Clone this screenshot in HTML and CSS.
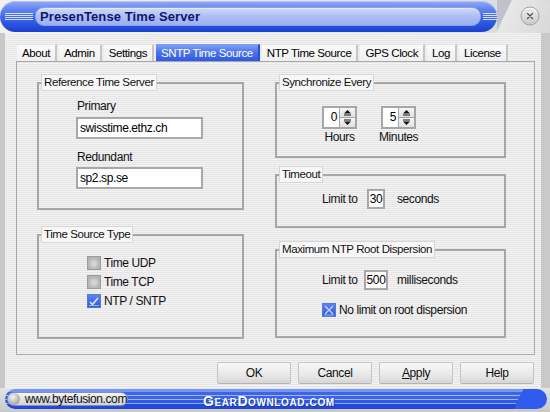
FILE: index.html
```html
<!DOCTYPE html>
<html>
<head>
<meta charset="utf-8">
<title>PresenTense Time Server</title>
<link rel="stylesheet" href="styles.css">
</head>
<body>
<div class="window">
  <div class="titlebar">
    <div class="bluebar">
      <div class="grip"></div>
      <div class="titlepill">PresenTense Time Server</div>
      <div class="grip grip-r"></div>
    </div>
    <div class="closezone">
      <div class="closebtn">
        <svg width="20" height="20" viewBox="0 0 20 20">
          <defs>
            <linearGradient id="cg" x1="0" y1="0" x2="0" y2="1">
              <stop offset="0" stop-color="#fafafa"/>
              <stop offset="1" stop-color="#c4c4c4"/>
            </linearGradient>
          </defs>
          <circle cx="10" cy="10" r="9" fill="url(#cg)" stroke="#a4a4a8" stroke-width="1"/>
          <circle cx="10" cy="10" r="6" fill="none" stroke="#d8d8dc" stroke-width="1"/>
          <path d="M7.5 7.5 L12.5 12.5 M12.5 7.5 L7.5 12.5" stroke="#55555c" stroke-width="1.4" stroke-linecap="round"/>
        </svg>
      </div>
    </div>
  </div>

  <div class="body">
    <div class="tabs">
      <div class="tab">About</div>
      <div class="tab">Admin</div>
      <div class="tab">Settings</div>
      <div class="tab tab-active">SNTP Time Source</div>
      <div class="tab">NTP Time Source</div>
      <div class="tab">GPS Clock</div>
      <div class="tab">Log</div>
      <div class="tab">License</div>
    </div>

    <div class="panel">
      <div class="col">
        <fieldset class="fs fs-ref">
          <legend>Reference Time Server</legend>
          <div class="fs-body">
            <div class="field-label">Primary</div>
            <div class="textbox">swisstime.ethz.ch</div>
            <div class="field-label field-label-2">Redundant</div>
            <div class="textbox">sp2.sp.se</div>
          </div>
        </fieldset>

        <fieldset class="fs fs-type">
          <legend>Time Source Type</legend>
          <div class="fs-body">
            <div class="cb"><span class="box box-off"></span><span>Time UDP</span></div>
            <div class="cb"><span class="box box-off"></span><span>Time TCP</span></div>
            <div class="cb">
              <span class="box box-on">
                <svg width="14" height="14" viewBox="0 0 14 14"><path d="M3 8 L5.5 10.5 L11 4" fill="none" stroke="#dfe8ff" stroke-width="1.6"/><path d="M2 11.5 H12" stroke="#9fb6fa" stroke-width="1"/></svg>
              </span>
              <span>NTP / SNTP</span>
            </div>
          </div>
        </fieldset>
      </div>

      <div class="col">
        <fieldset class="fs fs-sync">
          <legend>Synchronize Every</legend>
          <div class="fs-body units">
            <div class="unit">
              <div class="spin">
                <div class="spin-val">0</div>
                <div class="spin-btns">
                  <span><svg width="9" height="7" viewBox="0 0 9 7"><path d="M4.5 1 L8 4.5 H1 Z" fill="#111"/><rect x="1" y="5.5" width="7" height="1" fill="#111"/></svg></span>
                  <span><svg width="9" height="7" viewBox="0 0 9 7"><rect x="1" y="0.5" width="7" height="1" fill="#111"/><path d="M1 2.5 H8 L4.5 6 Z" fill="#111"/></svg></span>
                </div>
              </div>
              <div class="unit-label">Hours</div>
            </div>
            <div class="unit">
              <div class="spin">
                <div class="spin-val">5</div>
                <div class="spin-btns">
                  <span><svg width="9" height="7" viewBox="0 0 9 7"><path d="M4.5 1 L8 4.5 H1 Z" fill="#111"/><rect x="1" y="5.5" width="7" height="1" fill="#111"/></svg></span>
                  <span><svg width="9" height="7" viewBox="0 0 9 7"><rect x="1" y="0.5" width="7" height="1" fill="#111"/><path d="M1 2.5 H8 L4.5 6 Z" fill="#111"/></svg></span>
                </div>
              </div>
              <div class="unit-label">Minutes</div>
            </div>
          </div>
        </fieldset>

        <fieldset class="fs fs-timeout">
          <legend>Timeout</legend>
          <div class="fs-body">
            <div class="limit">
              <span class="limit-lbl">Limit to</span>
              <span class="slot"><span class="num">30</span></span>
              <span class="unit-text">seconds</span>
            </div>
          </div>
        </fieldset>

        <fieldset class="fs fs-disp">
          <legend>Maximum NTP Root Dispersion</legend>
          <div class="fs-body">
            <div class="limit">
              <span class="limit-lbl">Limit to</span>
              <span class="slot"><span class="num">500</span></span>
              <span class="unit-text">milliseconds</span>
            </div>
            <div class="cb cb-nolimit">
              <span class="box box-x">
                <svg width="14" height="14" viewBox="0 0 14 14"><path d="M3 3 L11 11 M11 3 L3 11" stroke="#c8d6ff" stroke-width="1.3"/><path d="M2 12 H12" stroke="#a8bcff" stroke-width="1"/></svg>
              </span>
              <span>No limit on root dispersion</span>
            </div>
          </div>
        </fieldset>
      </div>
    </div>

    <div class="actions">
      <div class="btn">OK</div>
      <div class="btn">Cancel</div>
      <div class="btn"><span class="ul">A</span>pply</div>
      <div class="btn">Help</div>
    </div>
  </div>

  <div class="status">
    <div class="statusbar">
      <div class="site"><span class="knob"></span><span>www.bytefusion.com</span></div>
      <div class="watermark">GearDownload.com</div>
    </div>
  </div>
</div>
</body>
</html>
```

FILE: styles.css
```css
html, body {
  margin: 0;
  padding: 0;
}

body {
  font-family: "Liberation Sans", Arial, sans-serif;
  font-size: 11.5px;
  letter-spacing: -0.4px;
  color: #111;
}

.window {
  width: 550px;
  height: 412px;
  display: flex;
  flex-direction: column;
  background: #cdcdcd;
  overflow: hidden;
}

/* ---------- title bar ---------- */
.titlebar {
  height: 33px;
  flex: none;
  display: flex;
  background: linear-gradient(to right, #f2f2f2, #dadada);
}

.bluebar {
  width: 497px;
  height: 31px;
  margin-top: 1px;
  border-radius: 16px;
  display: flex;
  align-items: center;
  background: linear-gradient(to bottom, #94acf6 0%, #6486ef 25%, #3d66e8 55%, #2550de 80%, #1b40cc 100%);
  box-shadow: inset 0 1px 0 #b4c4fa;
}

.grip {
  width: 28px;
  height: 7px;
  margin-left: 5px;
  background: repeating-linear-gradient(to bottom, #d4deff 0 1px, transparent 1px 2px);
}

.grip-r {
  width: 14px;
  margin-left: 2px;
}

.titlepill {
  flex: 1;
  height: 17px;
  margin-left: 2px;
  padding-left: 4px;
  border: 1px solid #8ca2ee;
  border-radius: 9px;
  display: flex;
  align-items: center;
  background: linear-gradient(to bottom, #d0daff 0%, #b0c0f4 45%, #9cb0ef 100%);
  box-shadow: inset 0 1px 0 #e6ecff;
  font-size: 13px;
  font-weight: bold;
  letter-spacing: 0.1px;
  color: #0e1670;
}

.closezone {
  flex: 1;
  display: flex;
  justify-content: flex-end;
  align-items: flex-start;
  padding: 6px 10px 0 0;
  border-top-right-radius: 12px;
  background: linear-gradient(116deg, #bfc2cc 0 13px, #e8e8e8 14px, #d8d8d8 100%);
}

.closebtn {
  width: 20px;
  height: 20px;
}

/* ---------- body ---------- */
.body {
  flex: 1;
  display: flex;
  flex-direction: column;
  padding: 11px 6px 0 11px;
  border-left: 5px solid #c8c8c8;
  border-right: 9px solid #c9c9c9;
  background: repeating-linear-gradient(to bottom, #f3f3f3 0 1px, #e5e5e5 1px 2px);
}

.tabs {
  display: flex;
  gap: 2px;
  height: 17px;
  padding-left: 1px;
}

.tab {
  padding: 0 5px;
  line-height: 16px;
  border-top: 1px solid #e2e2e2;
  border-right: 2px solid #c6c6c6;
  background: linear-gradient(to bottom, #fafafa, #efefef);
  color: #000;
  white-space: nowrap;
}

.tab-active {
  color: #fff;
  border-top-color: #7c9cf4;
  border-right-color: #2a52d8;
  background: linear-gradient(to bottom, #7e9ef5 0%, #4d74ec 45%, #2d58e2 100%);
}

.panel {
  border: 1px solid #a8a8a8;
  padding: 12px 0 15px 20px;
  display: grid;
  grid-template-columns: 207px 231px;
  column-gap: 31px;
  align-items: start;
}

.col {
  display: flex;
  flex-direction: column;
}

/* ---------- group boxes ---------- */
.fs {
  margin: 0;
  padding: 0;
  min-width: 0;
  border: 2px solid #a6a6a6;
}

.fs legend {
  margin-left: 2px;
  padding: 0 2px;
  height: 17px;
  box-sizing: border-box;
  line-height: 15px;
  border: 1px solid #d6d6d6;
  background: #f7f7f7;
  color: #111;
}

.fs-ref .fs-body {
  padding: 8px 0 19px 37px;
}

.field-label {
  line-height: 14px;
  margin-bottom: 4px;
  padding-left: 1px;
  font-size: 12px;
}

.field-label-2 {
  margin-top: 11px;
  margin-bottom: 3px;
}

.textbox {
  width: 127px;
  height: 22px;
  box-sizing: border-box;
  border: 2px solid #a8a8a8;
  background: #fff;
  padding-left: 2px;
  line-height: 18px;
  font-size: 12px;
  color: #000;
}

.fs-type {
  margin-top: 16px;
}

.fs-type .fs-body {
  padding: 10px 0 27px 48px;
}

.cb {
  display: flex;
  align-items: center;
  gap: 3px;
  height: 19px;
  font-size: 12px;
}

.box {
  width: 14px;
  height: 14px;
  box-sizing: border-box;
  flex: none;
  display: flex;
}

.box-off {
  border: 1px solid #9c9c9c;
  background: radial-gradient(circle at 50% 55%, #d4d4d4 0 2px, #b9b9b9 5px, #aaaaaa 100%);
}

.box-on,
.box-x {
  border: 1px solid #5a78d8;
  background: linear-gradient(to bottom, #5c82f0, #3058e0);
}

.box svg {
  margin: -1px;
}

.fs-sync .fs-body {
  padding: 15px 0 12px 45px;
}

.units {
  display: flex;
  gap: 22px;
  align-items: flex-start;
}

.unit {
  display: flex;
  flex-direction: column;
  align-items: center;
}

.spin {
  width: 35px;
  height: 23px;
  box-sizing: border-box;
  border: 2px solid #a6a6a6;
  display: flex;
}

.spin-val {
  flex: 1;
  background: #fff;
  text-align: right;
  padding-right: 2px;
  line-height: 19px;
  font-size: 12px;
  color: #000;
}

.spin-btns {
  width: 15px;
  border-left: 1px solid #a6a6a6;
  display: flex;
  flex-direction: column;
  gap: 1px;
  background: #a6a6a6;
}

.spin-btns span {
  flex: 1;
  display: flex;
  align-items: center;
  justify-content: center;
  background: linear-gradient(to bottom, #f6f6f6, #e0e0e0);
}

.unit-label {
  margin-top: 1px;
  line-height: 14px;
  font-size: 12px;
}

.fs-timeout {
  margin-top: 8px;
}

.fs-timeout .fs-body {
  padding: 6px 0 17px 45px;
}

.fs-disp {
  margin-top: 13px;
}

.fs-disp .fs-body {
  padding: 12px 0 18px 45px;
}

.limit {
  display: flex;
  align-items: center;
  height: 20px;
  font-size: 12px;
}

.limit-lbl {
  width: 33px;
  white-space: nowrap;
}

.slot {
  width: 42px;
  display: flex;
  justify-content: center;
}

.num {
  height: 20px;
  box-sizing: border-box;
  border: 2px solid #a8a8a8;
  background: #fff;
  padding: 0 1px;
  line-height: 16px;
  color: #000;
}

.cb-nolimit {
  margin-top: 12px;
  height: 16px;
}

/* ---------- buttons ---------- */
.actions {
  display: flex;
  justify-content: flex-end;
  gap: 7px;
  margin-top: 7px;
  padding-right: 1px;
}

.btn {
  width: 74px;
  height: 22px;
  box-sizing: border-box;
  display: flex;
  align-items: center;
  justify-content: center;
  border: 1px solid #c4c4c4;
  border-bottom-color: #b4b4b4;
  border-radius: 2px;
  background: linear-gradient(to bottom, #f7f7f7 0%, #e8e8e8 60%, #d6d6d6 100%);
  font-size: 12px;
  color: #111;
}

.ul {
  text-decoration: underline;
}

/* ---------- status bar ---------- */
.status {
  height: 24px;
  flex: none;
  padding: 1px 3px 0 5px;
  box-sizing: border-box;
  background: linear-gradient(to bottom, #e4e4e4, #c8c8c8);
}

.statusbar {
  height: 20px;
  border-radius: 10px;
  display: flex;
  align-items: center;
  padding-left: 2px;
  overflow: hidden;
  background:
    linear-gradient(115deg, transparent 94%, #2f5cec 94%),
    linear-gradient(to bottom, #7796f3 0 3px, #3c66e8 3px 6px, #a2b6f6 6px 7px, #3a63e8 7px 10px, #a2b6f6 10px 11px, #3058e4 11px 14px, #8ca6f4 14px 15px, #2448d8 15px 100%);
}

.site {
  width: 121px;
  height: 14px;
  box-sizing: border-box;
  border: 1px solid #7f8fbf;
  border-radius: 7px;
  display: flex;
  align-items: center;
  gap: 5px;
  background: linear-gradient(to bottom, #f4f4f4, #d2d2d2);
  font-size: 12px;
  color: #111;
}

.knob {
  width: 12px;
  height: 12px;
  border-radius: 50%;
  background: radial-gradient(circle at 40% 35%, #f4f4f4 0, #b8b8b8 55%, #8a8a8a 100%);
}

.watermark {
  margin-left: 75px;
  font-size: 14px;
  font-weight: bold;
  font-variant: small-caps;
  letter-spacing: 0.6px;
  color: #ffffff;
  text-shadow: 0 0 1px #2040c0, 1px 1px 0 #1a38b0;
  padding-top: 4px;
}
```
